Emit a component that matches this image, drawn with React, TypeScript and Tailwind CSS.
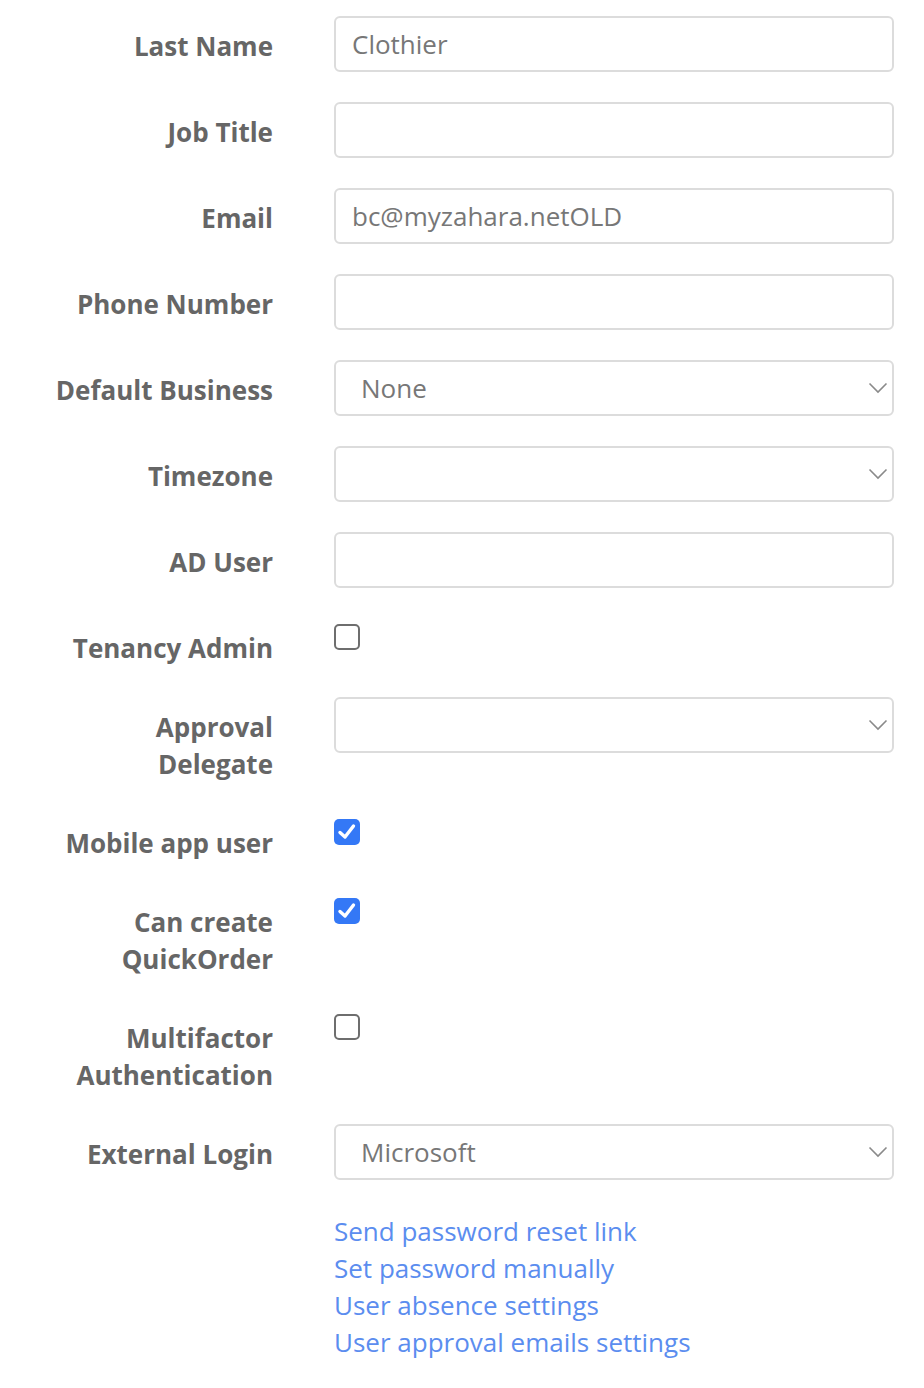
import React from "react";

const Chevron = () => (
  <svg width="20" height="12" viewBox="0 0 20 12" className="absolute right-[4px] top-1/2 -translate-y-1/2">
    <path d="M1.5 1.5 L10 10 L18.5 1.5" fill="none" stroke="#8a8a8a" strokeWidth="1.6" />
  </svg>
);

const Label = ({ children }: { children: React.ReactNode }) => (
  <div className="w-[273px] shrink-0 pt-[12px] text-right font-bold text-[26px] leading-[37px] text-[#666666]">
    {children}
  </div>
);

const TextInput = ({ value }: { value?: string }) => (
  <div className="h-[56px] w-[560px] rounded-[6px] border-2 border-[#dcdcdc] bg-white pl-[16px] flex items-center text-[26px] text-[#777777]">
    {value}
  </div>
);

const Select = ({ value }: { value?: string }) => (
  <div className="relative h-[56px] w-[560px] rounded-[6px] border-2 border-[#dcdcdc] bg-white pl-[25px] flex items-center text-[26px] text-[#777777]">
    {value}
    <Chevron />
  </div>
);

const Checkbox = ({ checked }: { checked?: boolean }) =>
  checked ? (
    <div className="mt-[6px] h-[26px] w-[26px] rounded-[5px] bg-[#3478f6] flex items-center justify-center">
      <svg width="20" height="18" viewBox="0 0 20 18">
        <path d="M3 9.5 L8 14 L16.5 3" fill="none" stroke="white" strokeWidth="3.4" strokeLinecap="round" strokeLinejoin="round" />
      </svg>
    </div>
  ) : (
    <div className="mt-[6px] h-[26px] w-[26px] rounded-[5px] border-2 border-[#6e6e6e] bg-white" />
  );

const Row = ({ label, children }: { label: React.ReactNode; children: React.ReactNode }) => (
  <div className="flex items-start gap-[61px] mb-[30px]">
    <Label>{label}</Label>
    <div>{children}</div>
  </div>
);

export default function App() {
  return (
    <div className="min-h-[1388px] w-[924px] bg-white pt-[16px] font-['Open_Sans',sans-serif]">
      <Row label="Last Name"><TextInput value="Clothier" /></Row>
      <Row label="Job Title"><TextInput /></Row>
      <Row label="Email"><TextInput value="bc@myzahara.netOLD" /></Row>
      <Row label="Phone Number"><TextInput /></Row>
      <Row label="Default Business"><Select value="None" /></Row>
      <Row label="Timezone"><Select /></Row>
      <Row label="AD User"><TextInput /></Row>
      <Row label="Tenancy Admin"><Checkbox /></Row>
      <Row label={<>Approval<br />Delegate</>}><Select /></Row>
      <Row label="Mobile app user"><Checkbox checked /></Row>
      <Row label={<>Can create<br />QuickOrder</>}><Checkbox checked /></Row>
      <Row label={<>Multifactor<br />Authentication</>}><Checkbox /></Row>
      <Row label="External Login"><Select value="Microsoft" /></Row>
      <div className="ml-[334px] pt-[3px] flex flex-col items-start text-[26px] leading-[37px] text-[#5b8def]">
        <a href="#" className="block">Send password reset link</a>
        <a href="#" className="block">Set password manually</a>
        <a href="#" className="block">User absence settings</a>
        <a href="#" className="block">User approval emails settings</a>
      </div>
    </div>
  );
}
